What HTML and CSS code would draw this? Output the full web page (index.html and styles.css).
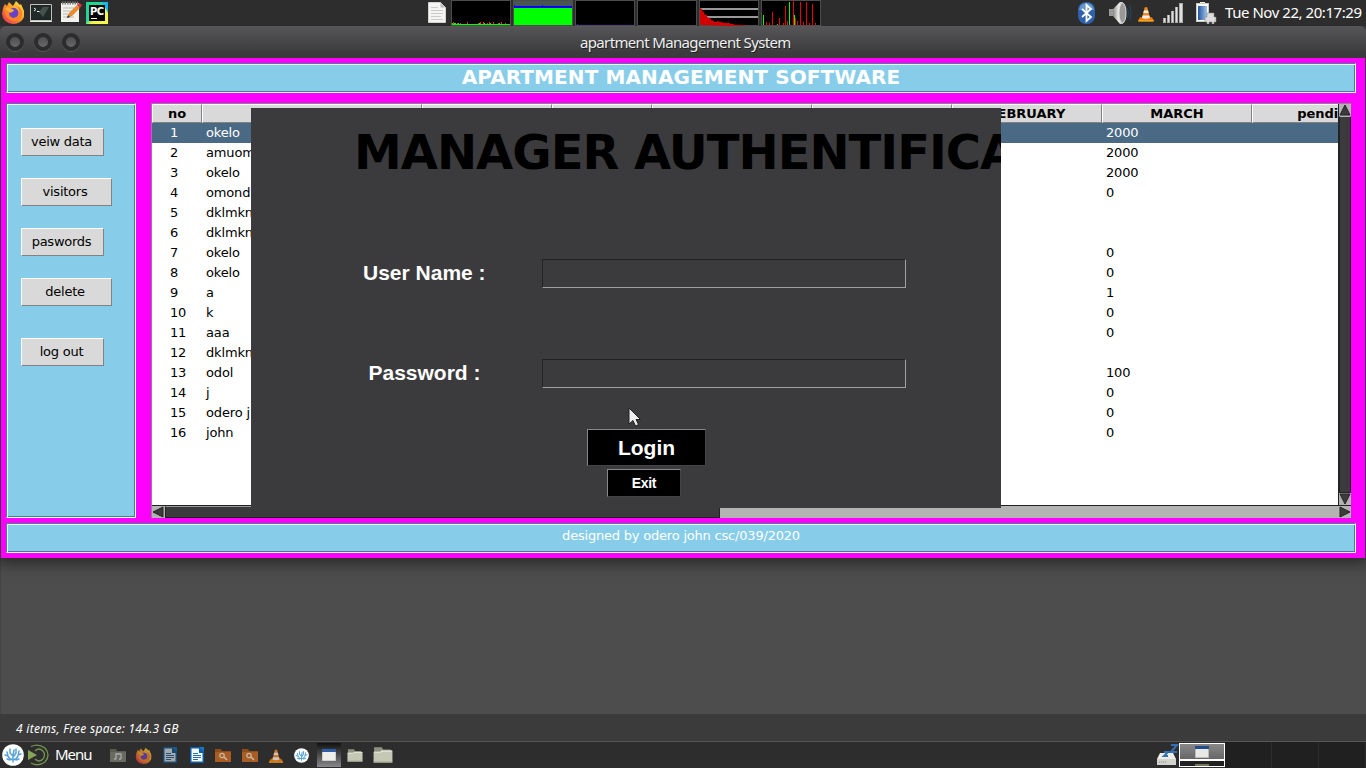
FILE: index.html
```html
<!DOCTYPE html>
<html lang="en">
<head>
<meta charset="utf-8">
<title>apartment Management System</title>
<link rel="stylesheet" href="styles.css">
</head>
<body>
<svg class="defs" width="0" height="0">
  <defs>
    <linearGradient id="fox" x1="1" y1="0" x2="0" y2="1"><stop offset="0" stop-color="#fff04a"/><stop offset=".45" stop-color="#ff9a28"/><stop offset="1" stop-color="#f0205a"/></linearGradient>
    <linearGradient id="metal" x1="0" y1="0" x2="1" y2="0"><stop offset="0" stop-color="#888"/><stop offset=".6" stop-color="#f4f4ee"/><stop offset="1" stop-color="#999"/></linearGradient>
    <linearGradient id="blue" x1="0" y1="0" x2="1" y2="0"><stop offset="0" stop-color="#24559c"/><stop offset="1" stop-color="#9fc4ee"/></linearGradient>
    <linearGradient id="pych" x1="0" y1="0" x2="1" y2="1"><stop offset="0" stop-color="#21d789"/><stop offset=".45" stop-color="#1fd6a0"/><stop offset=".6" stop-color="#f4f44c"/><stop offset="1" stop-color="#fcf84a"/></linearGradient>
    <symbol id="firefox" viewBox="0 0 24 24">
      <path d="M2 8 4 4l2 2 2-4 4 4 3-5 4 4 1-1 3 7v6q-3 7-11 7Q2 23 1 14Z" fill="url(#fox)"/>
      <circle cx="12.500" cy="13" r="5" fill="#6641c9"/><path d="M3 7q5-1 7 2l3 1q-1 3-5 3 0 4 4 5 5 0 6-5 1-4-3-7 7 2 6 9-2 6-9 6-9-2-9-14Z" fill="#ff8424"/><path d="M4 8q4-2 6 1l3 1q-1 2-5 2Z" fill="#ffb13b"/>
    </symbol>
    <symbol id="cone" viewBox="0 0 24 24">
      <path d="M5 17h14l3 5H2Z" fill="#f57c00"/><path d="M10.500 5h3L17 19q-5 2-10 0Z" fill="#f5871f"/><path d="M9.600 9h4.800l.9 3H8.700ZM7.900 15h8.200l.7 3q-5 2-9.600 0Z" fill="#f1eee8"/><path d="M3 21.500h18" stroke="#ffb12a" stroke-width="1.500"/>
    </symbol>
    <symbol id="coral" viewBox="0 0 22 22">
      <circle cx="11" cy="11" r="10.800" fill="#fff"/><path d="M11 18v-7l1-5M11 16q-4-1-5-4l-1-4M11 16q4-1 5-4l1-5M6 12l-3-1M16 11l3-1M11 12 8 9V5M12 12l2-3V5M8 16l-3-1M14 16l3-1" fill="none" stroke="#55a2da" stroke-width="1.500" stroke-linecap="round"/>
    </symbol>
    <symbol id="writer" viewBox="0 0 16 16">
      <path d="M1 0h10l4 5v11H1Z" fill="#0a5fa8"/><path d="M2.500 1.500H10v4.500h3.500v8.500h-11Z" fill="#f7fafc"/><path d="M10 0h5v5Z" fill="#1479c9"/><path d="M4 6.500h5M4 8.500h8M4 10.500h8M4 12.500h5" stroke="#246fae"/>
    </symbol>
    <symbol id="find" viewBox="0 0 16 16">
      <path d="M0 2h6l1 2h9v11H0Z" fill="#8f4c19"/><path d="M0 5h16v10H0Z" fill="#a75d23"/><circle cx="7" cy="8.500" r="2.200" fill="none" stroke="#c9b5a0" stroke-width="1.300"/><path d="m9 10 3 3" stroke="#c9b5a0" stroke-width="1.700"/>
    </symbol>
    <symbol id="folder" viewBox="0 0 18 16">
      <path d="M1 1h7l1 2h7v4H1Z" fill="#8f9280"/><path d="M.5 5h6l1-1h10v11H.5Z" fill="#c5c8b4"/><path d="M1 5.500h6l1-1h9" stroke="#e6e8d8" fill="none"/><path d="M1 14.500h16" stroke="#93967f"/>
    </symbol>
  </defs>
</svg>

<header class="panel">
  <svg class="ic ff" width="24" height="24"><use href="#firefox"/></svg>
  <svg class="ic term" width="24" height="24"><path d="M1.500 4.500h21v16h-21Z" fill="#202624" stroke="#bfc1bd"/><path d="M1 21.500h22" stroke="#e8e8e4"/><path d="M3 6h18v12H3Z" fill="#202b29"/><path d="m5 8 2 1.500-2 1.500M8 11.500h3" fill="none" stroke="#eee"/><path d="m10 12 4-5h6l-6 10Z" fill="#44514d"/></svg>
  <svg class="ic note" width="24" height="24"><path d="M2 3h18v19H2Z" fill="#f1f1ee"/><path d="M3 3h16" stroke="#777" stroke-width="3" stroke-dasharray="1.500 1"/><path d="M4 8h13M4 11h12M4 14h10M4 17h11" stroke="#b9b9b9"/><path d="m8 18 2-5 8-8 3 3-8 8Z" fill="#e78b2e"/><path d="m18 5 2-2 3 2-2 3Z" fill="#d33c44"/><path d="m8 18 1-3 2 2Z" fill="#333"/></svg>
  <svg class="ic pc" width="24" height="24"><path d="M1 2h22v22H1Z" fill="url(#pych)"/><path d="M17 2h6v11Z" fill="#18b8ef"/><path d="M4 5h16v16H4Z" fill="#050505"/><path d="M6 18.500h6" stroke="#fff"/><text x="5" y="14.500" class="pctext">PC</text></svg>
  <svg class="ic doc" width="24" height="24"><path d="M3.500 2.500h12l5 5v15h-17Z" fill="#f4f4f2" stroke="#d2d2d0"/><path d="M15.500 2.500v5h5Z" fill="#bbb"/><path d="M6 7.500h7M6 10.500h12M6 13.500h12M6 16.500h10M6 19.500h12" stroke="#ccc"/></svg>
  <div class="graphs">
    <svg width="60" height="26"><rect x=".5" y=".5" width="59" height="25" fill="#000" stroke="#4c4c4c"/><path d="M1 24.500h58" stroke="#0f0"/><path d="M1 23.500h4m2 0h1m8 0h1m10 0h2m4 0h1m5 0h1m8 0h1" stroke="#0f0"/><path d="M2.500 22v2m4-1v1m3-1v1m7-2v2m11-1v1m2-2v2m3-2v2m4-1v1m2-2v2m4-2v2m5-1v1m3-2v2m4-1v1" stroke="#e43b00"/></svg>
    <svg width="60" height="26"><rect x=".5" y=".5" width="59" height="25" fill="#475652" stroke="#4c4c4c"/><path d="M1 8h58v17H1Z" fill="#0f0"/><path d="M1 7h58" stroke="#00f" stroke-width="2"/><path d="M29.500 5v2M1.500 5v2" stroke="#00f"/></svg>
    <svg width="60" height="26"><rect x=".5" y=".5" width="59" height="25" fill="#000" stroke="#4c4c4c"/><path d="M1 24.500h58" stroke="#100033"/><path d="M2 24.500h1" stroke="#22f"/></svg>
    <svg width="60" height="26"><rect x=".5" y=".5" width="59" height="25" fill="#000" stroke="#4c4c4c"/></svg>
    <svg width="60" height="26"><rect x=".5" y=".5" width="59" height="25" fill="#000" stroke="#4c4c4c"/><path d="M1 9h58M1 17h58" stroke="#999" stroke-width="2"/><path d="M1 25V8l2 1v2l2 1v2l3 1v2l4 2v1l3 1v1h3v-1l8 2h5v1h4v1h5l10 1h10v1Z" fill="#d40000"/></svg>
    <svg width="60" height="26"><rect x=".5" y=".5" width="59" height="25" fill="#000" stroke="#4c4c4c"/><path d="M5 22h1v3H5ZM8 23h1v2H8ZM11 12h1v13h-1ZM18 18h1v7h-1ZM22 23h1v2h-1ZM24 6h1v19h-1ZM26 21h1v4h-1ZM32 1h1v24h-1ZM34 18h1v7h-1ZM36 21h1v4h-1ZM39 2h1v23h-1ZM42 22h1v3h-1ZM45 2h1v23h-1ZM48 23h1v2h-1ZM51 4h1v21h-1ZM54 23h1v2h-1Z" fill="#f00000"/><path d="M2 15h1v10H2ZM16 24h1v1h-1ZM28 2h1v23h-1ZM33 15h1v10h-1Z" fill="#0f0"/></svg>
  </div>
  <svg class="ic bt" width="24" height="24"><rect x="4" y="2" width="17" height="22" rx="8" fill="#2e62ac"/><path d="M5 10q1-7 7.500-7t7.500 7Z" fill="#6794c9"/><path d="m8 9 9 8-4.500 4V5L17 9l-9 8" fill="none" stroke="#fff" stroke-width="1.800"/></svg>
  <svg class="ic spk" width="24" height="24"><path d="M1 9h4v7H1Z" fill="#999"/><path d="m5 9 7-7h3v22h-3l-7-8Z" fill="url(#metal)"/><ellipse cx="14.500" cy="13" rx="3.500" ry="10" fill="#999" stroke="#ddd"/><path d="M19.500 8q2 5 0 10M22 5q2 8 0 15" fill="none" stroke="#284867"/></svg>
  <svg class="ic vlc" width="24" height="24"><use href="#cone" x="2" y="3" width="20" height="20"/></svg>
  <svg class="ic sig" width="24" height="24"><path d="M1 18h3v5H1ZM5 15h3v8H5ZM9 11h3v12H9ZM13 7h3v16h-3ZM17 3h4v20h-4Z" fill="#aaa"/><path d="M2 18h1v4H2ZM6 15h1v7H6ZM10 11h1v11h-1ZM14 7h1v15h-1ZM18 4h2v18h-2Z" fill="#e0e0e0"/></svg>
  <svg class="ic bat" width="24" height="24"><path d="M7 2h5v3H7Z" fill="#eee"/><rect x="3.500" y="3.500" width="12" height="18" fill="#fff" stroke="#ccc"/><path d="M5 6h9v14H5Z" fill="url(#blue)"/><path d="M14 13h7v4h2v5h-2v2h-2v-2h-3v2h-2v-2h-2v-5h2Z" fill="#ddd" stroke="#888" stroke-width=".6"/></svg>
  <span class="clock">Tue Nov 22, 20:17:29</span>
</header>

<section class="window">
  <div class="titlebar"><i class="knob"></i><i class="knob"></i><i class="knob"></i><span class="wtitle">apartment Management System</span></div>
  <div class="client">
    <h1 class="groove banner"><span>APARTMENT MANAGEMENT SOFTWARE</span></h1>
    <div class="middle">
      <nav class="groove side">
        <button class="btn">veiw data</button>
        <button class="btn wide">visitors</button>
        <button class="btn">paswords</button>
        <button class="btn wide">delete</button>
        <button class="btn last">log out</button>
      </nav>
      <main class="tablebox">
        <div class="grid">
          <div class="row head"><b>no</b><b></b><b></b><b></b><b></b><b></b><b>FEBRUARY</b><b>MARCH</b><b>pending</b></div>
          <div class="row sel"><span>1</span><span>okelo</span><span class="march">2000</span></div>
          <div class="row"><span>2</span><span>amuom</span><span class="march">2000</span></div>
          <div class="row"><span>3</span><span>okelo</span><span class="march">2000</span></div>
          <div class="row"><span>4</span><span>omond</span><span class="march">0</span></div>
          <div class="row"><span>5</span><span>dklmkn</span></div>
          <div class="row"><span>6</span><span>dklmkn</span></div>
          <div class="row"><span>7</span><span>okelo</span><span class="march">0</span></div>
          <div class="row"><span>8</span><span>okelo</span><span class="march">0</span></div>
          <div class="row"><span>9</span><span>a</span><span class="march">1</span></div>
          <div class="row"><span>10</span><span>k</span><span class="march">0</span></div>
          <div class="row"><span>11</span><span>aaa</span><span class="march">0</span></div>
          <div class="row"><span>12</span><span>dklmkn</span></div>
          <div class="row"><span>13</span><span>odol</span><span class="march">100</span></div>
          <div class="row"><span>14</span><span>j</span><span class="march">0</span></div>
          <div class="row"><span>15</span><span>odero j</span><span class="march">0</span></div>
          <div class="row"><span>16</span><span>john</span><span class="march">0</span></div>
        </div>
        <div class="vbar">
          <svg width="12" height="12"><path d="m6 1 5 10H1Z" fill="#3b3b3d" stroke="#222"/></svg>
          <i class="vthumb"></i>
          <svg width="12" height="12"><path d="M1 1h10L6 11Z" fill="#3b3b3d" stroke="#222"/></svg>
        </div>
        <div class="hbar">
          <svg width="12" height="12"><path d="m1 6 10-5v10Z" fill="#3b3b3d" stroke="#222"/></svg>
          <i class="hthumb"></i>
          <svg class="right" width="12" height="12"><path d="m11 6-10-5v10Z" fill="#3b3b3d" stroke="#222"/></svg>
        </div>
      </main>
    </div>
    <footer class="groove foot"><span>designed by odero john csc/039/2020</span></footer>
  </div>
  <form class="login">
    <h2><span>MANAGER AUTHENTIFICATION</span></h2>
    <div class="field"><label for="u">User Name :</label><input id="u"></div>
    <div class="field second"><label for="p">Password :</label><input id="p" type="password"></div>
    <div class="actions"><button type="button" class="go">Login</button><button type="button" class="exit">Exit</button></div>
    <svg class="pointer" width="14" height="21"><path d="M1 1v16l4-3.500 2.500 5.500 3-1.500L8 12.500h4.500Z" fill="#eee" stroke="#222"/></svg>
  </form>
</section>

<div class="desktop"></div>
<div class="status"><span>4 items, Free space: 144.3 GB</span></div>
<footer class="taskbar">
  <svg class="ic t1" width="22" height="22"><use href="#coral"/></svg>
  <svg class="ic t2" width="22" height="22"><path d="m0 6 9 5-9 5Z" fill="#87a556"/><path d="M3 2.500Q10-1 17 4q6 7 0 14-7 5-14 1M7 7q4-4 8 0 3 4 0 8-4 4-8 0" fill="none" stroke="#759250" stroke-width="1.300"/></svg>
  <span class="menu">Menu</span>
  <svg class="ic t3" width="16" height="16"><path d="M0 2h6l1 2h9v11H0Z" fill="#595b51"/><path d="M0 5h16v10H0Z" fill="#696b61"/><path d="M6 12V7h5v5M4 12h2M9 12h2" fill="none" stroke="#aaa" stroke-width="1.300"/></svg>
  <svg class="ic t4" width="17" height="17"><use href="#firefox"/></svg>
  <svg class="ic t5" width="16" height="16"><use href="#writer"/></svg>
  <svg class="ic t6" width="16" height="16"><use href="#writer"/></svg>
  <svg class="ic t7" width="16" height="16"><use href="#find"/></svg>
  <svg class="ic t8" width="16" height="16"><use href="#find"/></svg>
  <svg class="ic t9" width="18" height="18"><use href="#cone"/></svg>
  <svg class="ic t10" width="15" height="15"><use href="#coral"/></svg>
  <span class="active"><svg width="14" height="12"><path d="M.5.500h13v11H.5Z" fill="#eeeeea" stroke="#cfcfcb"/><path d="M0 1.500h14" stroke="#315fa7" stroke-width="3"/></svg></span>
  <svg class="ic t11" width="16" height="15"><use href="#folder"/></svg>
  <svg class="ic t12" width="20" height="18"><use href="#folder"/></svg>
  <svg class="ic t13" width="22" height="22"><path d="M3 9h13l3 6v6H0v-6Z" fill="#ededea"/><path d="M0 15h19v6H0Z" fill="#d2d2cf"/><path d="M2 18h8" stroke="#888" stroke-dasharray="1 1"/><path d="M14 1h6l-6 7h6M7 8h4l-4 4h4" fill="none" stroke="#3670b5" stroke-width="2"/></svg>
  <span class="desk cur"><svg width="14" height="12"><path d="M.5.500h13v11H.5Z" fill="#e8e8e4" stroke="#bbb"/><path d="M0 1.500h14" stroke="#214d88" stroke-width="3"/></svg><i></i></span>
  <span class="desk"></span><span class="desk"></span><span class="desk"></span>
</footer>
</body>
</html>
```
FILE: styles.css
```css
* { box-sizing: border-box; }
body { margin: 0; width: 1366px; height: 768px; overflow: hidden; display: flex; flex-direction: column; background: #4d4d4d; font: 13px "DejaVu Sans", sans-serif; color: #000; }
.defs { position: absolute; }
svg { display: block; flex: none; }
h1, h2 { margin: 0; }
button, input { font: inherit; padding: 0; border-radius: 0; }

.panel { position: relative; z-index: 1; height: 26px; flex: none; display: flex; background: #2d2d2d; align-items: flex-start; }
.ff { margin-left: 1px; }
.term { margin-left: 4px; }
.note { margin-left: 6px; }
.pc { margin-left: 2px; }
.pctext { font: bold 10px "DejaVu Sans", sans-serif; fill: #fff; letter-spacing: -.5px; }
.doc { margin-left: 316px; }
.graphs { display: flex; gap: 2px; margin-left: 2px; }
.bt { margin-left: 253px; }
.spk { margin-left: 10px; }
.vlc { margin-left: 2px; }
.sig { margin-left: 4px; }
.bat { margin-left: 7px; }
.clock { margin-left: 8px; font: 15px/25px "Noto Sans", sans-serif; color: #fff; white-space: nowrap; letter-spacing: -.45px; }

.window { position: relative; flex: none; height: 532px; background: #3b3b3d; box-shadow: 0 2px 14px 3px rgba(0,0,0,.5); }
.titlebar { height: 32px; display: flex; align-items: center; gap: 10px; padding: 0 0 0 6px; background: linear-gradient(#555557, #3b3b3d 85%); border-top: 1px solid #565656; border-radius: 6px 6px 0 0; }
.knob { width: 18px; height: 18px; border-radius: 50%; border: 4px solid #2c2c2d; background: linear-gradient(#4d4d4f, #69696b); box-shadow: 0 1px #5a5a5c; margin-bottom: 2px; }
.wtitle { margin-left: 490px; font: 15px/29px "Noto Sans", sans-serif; letter-spacing: -.65px; color: #eee; text-shadow: 1px 1px #222; white-space: nowrap; }

.client { height: 500px; margin: 0 1px; padding: 5px 9px 5px 5px; background: #f0f; display: flex; flex-direction: column; }
.groove { background: #87cdea; border: 1px solid #4f7b8c; border-right-color: #d9ffff; border-bottom-color: #d9ffff; box-shadow: inset 1px 1px #d9ffff, inset -1px -1px #4f7b8c; }
.banner { height: 30px; text-align: center; color: #fff; font: bold 20px/27px "DejaVu Sans", sans-serif; letter-spacing: .1px; }
.middle { display: flex; height: 415px; margin-top: 10px; }
.side { width: 130px; padding: 24px 0 0 14px; display: flex; flex-direction: column; align-items: flex-start; gap: 22px; }
.btn { width: 83px; height: 28px; background: #d9d9d9; border: 1px solid #fff; border-right-color: #828282; border-bottom-color: #828282; line-height: 24px; letter-spacing: -.25px; padding-right: 2px; }
.wide { width: 91px; padding-right: 3px; }
.last { margin-top: 10px; }

.tablebox { width: 1200px; margin-left: 15px; display: grid; grid-template: 401px 13px / 1186px 13px; border-left: 1px solid #888; border-top: 1px solid #888; }
.grid { background: #fff; overflow: hidden; }
.row { display: grid; width: 1250px; height: 20px; line-height: 19px; letter-spacing: -.15px; grid-template-columns: 50px 220px 130px 100px 160px 140px 150px 150px 150px; }
.row span { padding-left: 4px; white-space: nowrap; }
.row span:first-child { padding-left: 18px; }
.row .march { grid-column: 8; }
.head { height: 19px; text-align: center; background: #d9d9d9; letter-spacing: 0; }
.head b { border: 1px solid #fff; border-right-color: #828282; border-bottom-color: #828282; line-height: 17px; }
.sel { background: #4a6984; color: #fff; }
.vbar { border-left: 1px solid #222; background: #b3b3b3; display: flex; flex-direction: column; }
.vthumb { flex: 1; background: #3b3b3d; border: 1px solid #222; border-top-color: #b3b3b3; }
.hbar { grid-column: 1 / 3; border-top: 1px solid #222; background: #b3b3b3; display: flex; }
.hthumb { width: 555px; margin-left: 1px; background: #3b3b3d; border: 1px solid #222; border-top-color: #999; }
.right { margin-left: auto; }
.foot { height: 30px; margin-top: 5px; text-align: center; color: #fff; line-height: 23px; letter-spacing: -.2px; }

.login { position: absolute; left: 251px; top: 82px; width: 750px; height: 400px; margin: 0; overflow: hidden; background: #3b3b3d; color: #fff; }
.login h2 { height: 151px; padding: 16px 0 0 103px; font: bold 48px/57px "DejaVu Sans", sans-serif; letter-spacing: -1px; color: #000; white-space: nowrap; }
.field { display: flex; height: 29px; margin-bottom: 71px; padding-left: 112px; }
.field label { width: 122px; margin-right: 57px; text-align: center; font: bold 21px/28px "Liberation Sans", sans-serif; white-space: nowrap; }
.second label { padding-left: 1px; }
.field input { width: 364px; height: 29px; background: #3b3b3d; border: 1px solid #222; border-right-color: #a0a0a0; border-bottom-color: #a0a0a0; color: #fff; }
.actions { display: flex; flex-direction: column; margin-top: -30px; }
.actions button { background: #000; color: #fff; border: 1px solid #888; border-right-color: #444; border-bottom-color: #444; font-family: "Liberation Sans", sans-serif; font-weight: bold; }
.actions .go { width: 119px; height: 37px; margin-left: 336px; font-size: 21px; }
.actions .exit { width: 74px; height: 28px; margin: 3px 0 0 356px; font-size: 14px; letter-spacing: -.3px; }
.pointer { position: absolute; left: 377px; top: 299px; }

.desktop { flex: 1; border-left: 1px solid #444; }
.status { position: relative; height: 27px; flex: none; padding-left: 16px; background: #3b3b3c; font: italic 12px/29px "Noto Sans", sans-serif; letter-spacing: .28px; color: #fff; }
.taskbar { height: 27px; flex: none; display: flex; align-items: center; background: #2d2d2d; border-top: 1px solid #555; }
.t1 { margin-left: 2px; }
.t2 { margin-left: 4px; }
.menu { width: 50px; margin-left: 5px; font: 15px/25px "Noto Sans", sans-serif; letter-spacing: -1px; color: #fff; padding-bottom: 2px; }
.t3 { margin-left: 5px; }
.t4 { margin-left: 9px; opacity: .7; }
.t5 { margin-left: 10px; opacity: .6; }
.t6 { margin-left: 11px; }
.t7 { margin-left: 10px; }
.t8 { margin-left: 11px; }
.t9 { margin-left: 9px; opacity: .8; }
.t10 { margin-left: 9px; }
.active { width: 24px; height: 24px; margin-left: 8px; display: flex; align-items: center; justify-content: center; background: linear-gradient(#111, #88888c); }
.t11 { margin-left: 6px; }
.t12 { margin-left: 10px; }
.t13 { margin-left: 764px; }
.desk { flex: 1; height: 26px; background: #202020; border-right: 1px solid #2d2d2d; }
.cur { flex: none; width: 46px; height: 24px; display: flex; flex-direction: column; align-items: center; justify-content: space-between; padding-top: 2px; border: 1px solid #fff; background: linear-gradient(#888, #666 70%, #fff 70%, #fff 76%, #222 76%); }
.cur i { width: 14px; height: 2px; background: #77775c; }
```
